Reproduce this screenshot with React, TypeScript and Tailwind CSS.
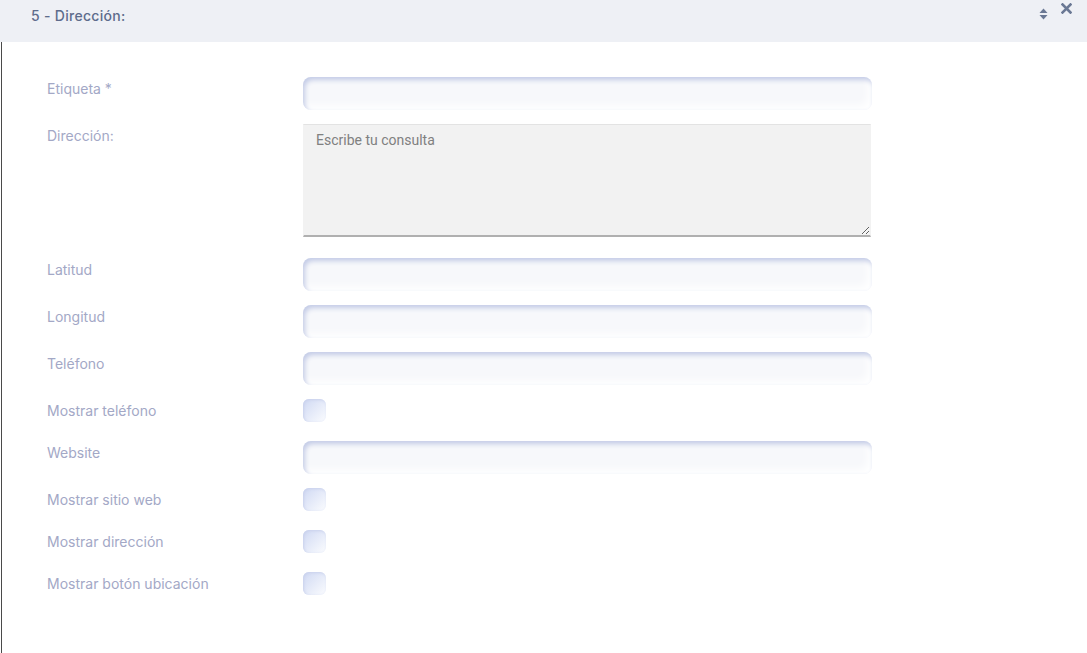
import React from 'react'

const font = "font-['Inter','Noto_Sans',sans-serif]"

const inputCls =
  'block h-[33px] w-[569px] rounded-[8px] bg-[#f7f8fb] shadow-[inset_2px_3px_5px_#c3cbe6,inset_-4px_-4px_8px_#ffffff] outline-none'

const checkCls =
  'block h-[23px] w-[23px] rounded-[6px] bg-gradient-to-br from-[#d0d9f3] to-[#fbfcfe] shadow-[inset_1px_1px_3px_#c9d1ec]'

type Row = { label: string; kind: 'input' | 'textarea' | 'check' }

const rows: Row[] = [
  { label: 'Etiqueta *', kind: 'input' },
  { label: 'Dirección:', kind: 'textarea' },
  { label: 'Latitud', kind: 'input' },
  { label: 'Longitud', kind: 'input' },
  { label: 'Teléfono', kind: 'input' },
  { label: 'Mostrar teléfono', kind: 'check' },
  { label: 'Website', kind: 'input' },
  { label: 'Mostrar sitio web', kind: 'check' },
  { label: 'Mostrar dirección', kind: 'check' },
  { label: 'Mostrar botón ubicación', kind: 'check' },
]

export default function App() {
  return (
    <div className={`h-[653px] w-[1087px] overflow-hidden bg-white ${font}`}>
      {/* header bar */}
      <div className="relative flex h-[42px] items-start bg-[#eef0f5] pl-[31px] pt-[6px]">
        <span className="text-[14px] font-medium leading-[20px] tracking-[0.3px] text-[#5d6c8c]">
          5 - Dirección:
        </span>
        <div className="absolute right-[15px] top-[3px] flex items-start gap-[13px]">
          <svg width="9" height="12" viewBox="0 0 9 12" className="mt-[5px]">
            <path d="M4.5 0.5 L8.5 5 H0.5 Z" fill="#6a7894" />
            <path d="M4.5 11.5 L8.5 7 H0.5 Z" fill="#6a7894" />
          </svg>
          <svg width="11" height="11" viewBox="0 0 11 11">
            <path d="M1.5 1.5 L9.5 9.5 M9.5 1.5 L1.5 9.5" stroke="#6a7894" strokeWidth="2.6" strokeLinecap="square" />
          </svg>
        </div>
      </div>

      {/* body */}
      <div className="ml-[1px] h-[611px] border-l border-[#4a4a4a] pl-[45px] pt-[35px]">
        {rows.map((r) => (
          <div key={r.label} className="mb-[14px] flex items-start">
            <label className="w-[256px] text-[14px] leading-[24px] text-[#a3a8c6]">{r.label}</label>
            {r.kind === 'input' && <input className={inputCls} />}
            {r.kind === 'check' && (
              <div className="h-[28px]">
                <span className={checkCls} />
              </div>
            )}
            {r.kind === 'textarea' && (
              <div className="h-[120px]">
                <textarea
                  placeholder="Escribe tu consulta"
                  className="block h-[113px] w-[568px] resize-y border border-t-[#e3e3e3] border-x-[#f2f2f2] border-b-[2px] border-b-[#b0b0b0] bg-[#f2f2f2] px-[12px] py-[6px] font-['Roboto','Noto_Sans',sans-serif] text-[14px] leading-[18px] text-[#555] placeholder:text-[#808080] outline-none"
                />
              </div>
            )}
          </div>
        ))}
      </div>
    </div>
  )
}
